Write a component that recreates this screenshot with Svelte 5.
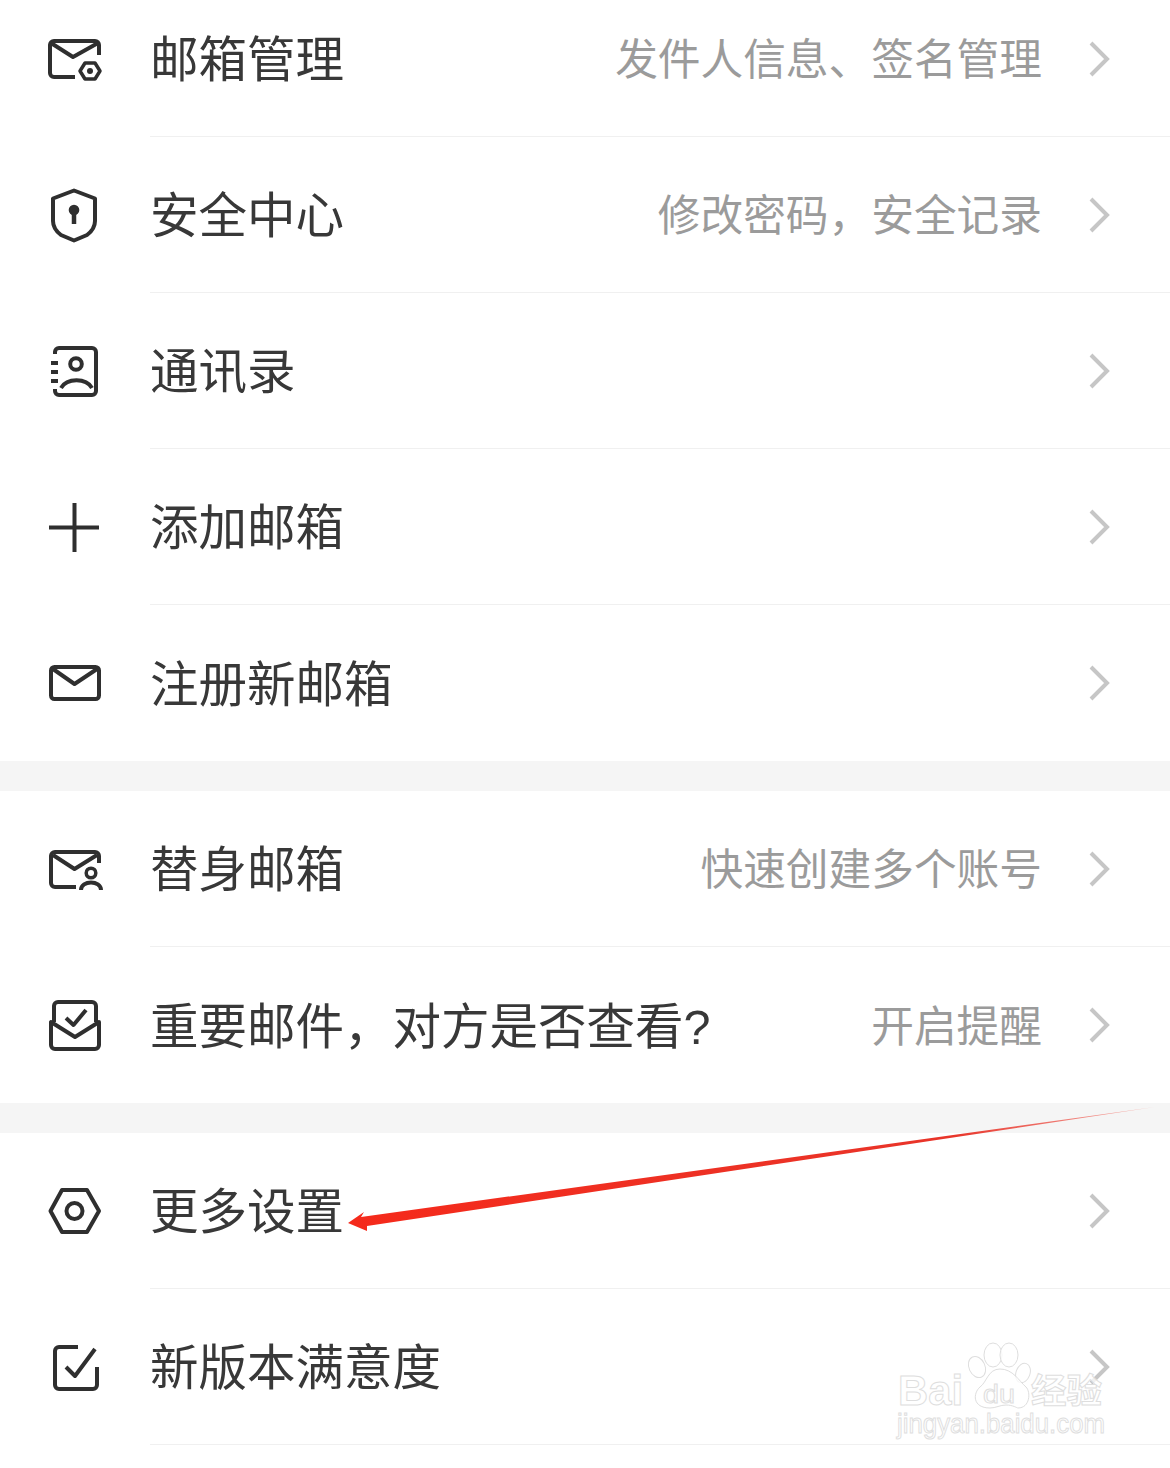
<script>
    const groups = [
        [
            { icon: "mailGear", title: "邮箱管理", sub: "发件人信息、签名管理" },
            { icon: "shield", title: "安全中心", sub: "修改密码，安全记录" },
            { icon: "contacts", title: "通讯录" },
            { icon: "plus", title: "添加邮箱" },
            { icon: "mail", title: "注册新邮箱" },
        ],
        [
            { icon: "mailUser", title: "替身邮箱", sub: "快速创建多个账号" },
            { icon: "inbox", title: "重要邮件，对方是否查看?", sub: "开启提醒" },
        ],
        [
            { icon: "hex", title: "更多设置", line: true },
            { icon: "check", title: "新版本满意度", line: true },
        ],
    ];
</script>

{#snippet glyph(name)}
    <svg class="icon" viewBox="0 0 60 60" fill="none" stroke="#2f2f2f" stroke-width="4" stroke-linejoin="round">
        {#if name === "mailGear"}
            <path d="M54 26V16a4 4 0 0 0-4-4H9a4 4 0 0 0-4 4v28a4 4 0 0 0 4 4h21" />
            <path d="M6 14l22 14 25-14" />
            <path d="M35 42l5-8h10l5 8-5 8H40z" stroke-width="3.5" />
            <circle cx="45" cy="42" r="3" fill="#2f2f2f" stroke="none" />
        {:else if name === "shield"}
            <path d="M29 5.500L50 13.500V36Q50 44 42 50L29 55.500 16 50Q8 44 8 36V13.500Z" />
            <circle cx="29" cy="25" r="5.300" fill="#2f2f2f" stroke="none" />
            <path d="M29 26V39" stroke-width="4.500" />
        {:else if name === "contacts"}
            <path d="M10 13v-2a4 4 0 0 1 4-4h33a4 4 0 0 1 4 4v39a4 4 0 0 1-4 4H14a4 4 0 0 1-4-4v-2" />
            <path d="M6 22h7M6 31h7M6 40h7" />
            <circle cx="31" cy="23" r="5.800" />
            <path d="M16 47A17 13 0 0 1 47 47" />
        {:else if name === "plus"}
            <path d="M4 30.500H54M29.500 6V55" />
        {:else if name === "mail"}
            <rect x="6" y="14" width="48" height="32" rx="3.500" />
            <path d="M8 16l21.500 15L52 16" />
        {:else if name === "mailUser"}
            <path d="M54 24v-7a4 4 0 0 0-4-4H10a4 4 0 0 0-4 4v27a4 4 0 0 0 4 4h21" />
            <path d="M8 16l21.500 14L52 16" />
            <circle cx="46" cy="34" r="4.800" stroke-width="3.500" />
            <path d="M36 51C36 41 56 41 56 51" />
        {:else if name === "inbox"}
            <path d="M9 27V11a4 4 0 0 1 4-4h34a4 4 0 0 1 4 4v16" />
            <path d="M6 27V50a4 4 0 0 0 4 4h40a4 4 0 0 0 4-4V27L30 42Z" />
            <path d="M21 23l7.500 7L41 15" />
        {:else if name === "hex"}
            <path d="M5.500 30L17 9H42L54 30 42 51H17Z" />
            <circle cx="29.500" cy="30" r="8" />
        {:else if name === "check"}
            <path d="M33 10H14a4 4 0 0 0-4 4v34a4 4 0 0 0 4 4h34a4 4 0 0 0 4-4V30" />
            <path d="M21 30l9 9L50 12" />
        {/if}
    </svg>
{/snippet}

<main class="page">
    {#each groups as group}
        <section class="group">
            {#each group as item}
                <div class="row">
                    {@render glyph(item.icon)}
                    <div class="body" class:line={item.line}>
                        <span class="title">{item.title}</span>
                        {#if item.sub}
                            <span class="sub">{item.sub}</span>
                        {/if}
                        <svg class="chevron" viewBox="0 0 22 36" fill="none" stroke="#c6c6c6" stroke-width="4">
                            <path d="M3 2l16 16L3 34" />
                        </svg>
                    </div>
                </div>
            {/each}
        </section>
    {/each}

    <!-- red annotation arrow drawn on top of the screenshot -->
    <svg class="arrow" viewBox="0 0 1170 1468">
        <defs>
            <linearGradient id="fade" x1="349" y1="0" x2="1155" y2="0" gradientUnits="userSpaceOnUse">
                <stop offset="0%" stop-color="#f52a1b" />
                <stop offset="75%" stop-color="#e8352a" />
                <stop offset="100%" stop-color="#f5b5b0" />
            </linearGradient>
        </defs>
        <path d="M348 1223L364 1212 361 1217 1155 1107 367 1226 367 1231Z" fill="url(#fade)" />
    </svg>

    <!-- baidu watermark -->
    <svg class="mark" viewBox="0 0 290 148">
        <g fill="#fff" fill-opacity="0.75" stroke="#dedede" stroke-width="1">
            <ellipse cx="97" cy="47" rx="8" ry="11" transform="rotate(-25 97 47)" />
            <ellipse cx="113" cy="35" rx="9" ry="12" />
            <ellipse cx="129" cy="35" rx="9" ry="12" />
            <ellipse cx="143" cy="53" rx="7" ry="10" transform="rotate(20 143 53)" />
            <path d="M120 49C108 49 107 62 100 67 93 73 92 88 110 88 116 88 120 85 126 85 133 85 137 88 138 88 150 88 151 72 146 67 139 61 133 49 120 49Z" />
            <text class="wm-big" x="18" y="85" textLength="65" lengthAdjust="spacingAndGlyphs">Bai</text>
            <text class="wm-mid" x="103" y="83" textLength="32" lengthAdjust="spacingAndGlyphs">du</text>
            <text class="wm-cjk" x="151" y="83" textLength="71" lengthAdjust="spacingAndGlyphs">经验</text>
            <text class="wm-url" x="17" y="113" textLength="208" lengthAdjust="spacingAndGlyphs">jingyan.baidu.com</text>
        </g>
    </svg>
</main>

<style>
    :global(body) {
        margin: 0;
        background: #fff;
    }

    .page {
        position: relative;
        height: 1468px;
        overflow: hidden;
        background: #fff;
        font-family: "Liberation Sans", "Noto Sans CJK SC", sans-serif;
    }

    .group {
        border-bottom: 30px solid #f5f5f5;
    }
    .group:first-child {
        margin-top: -19px;
    }
    .group:last-of-type {
        border-bottom: 0;
    }

    .row {
        display: flex;
        height: 156px;
        padding-left: 45px;
    }

    .icon {
        width: 60px;
        height: 60px;
        flex: none;
        align-self: center;
    }

    .body {
        flex: 1;
        min-width: 0;
        display: flex;
        align-items: center;
        margin-left: 45px;
        padding-right: 60px;
    }
    .row:not(:last-child) .body,
    .body.line {
        border-bottom: 1px solid #f0f0f0;
    }

    .title {
        flex: 1;
        font-size: 48.5px;
        line-height: 60px;
        padding-top: 3px;
        color: #383838;
        white-space: nowrap;
    }

    .sub {
        margin-right: 46px;
        font-size: 42.7px;
        line-height: 60px;
        padding-top: 3px;
        color: #9b9b9b;
        white-space: nowrap;
    }

    .chevron {
        width: 22px;
        height: 36px;
        flex: none;
    }

    .arrow {
        position: absolute;
        inset: 0;
        width: 1170px;
        height: 1468px;
        pointer-events: none;
    }

    .mark {
        position: absolute;
        left: 880px;
        top: 1320px;
        width: 290px;
        height: 148px;
    }

    .wm-big {
        font: 700 42px "Liberation Sans", sans-serif;
    }
    .wm-mid {
        font: 400 26px "Liberation Sans", sans-serif;
    }
    .wm-cjk {
        font: 700 34px "Noto Sans CJK SC", sans-serif;
    }
    .wm-url {
        font: 400 28px "Liberation Sans", sans-serif;
    }
</style>
